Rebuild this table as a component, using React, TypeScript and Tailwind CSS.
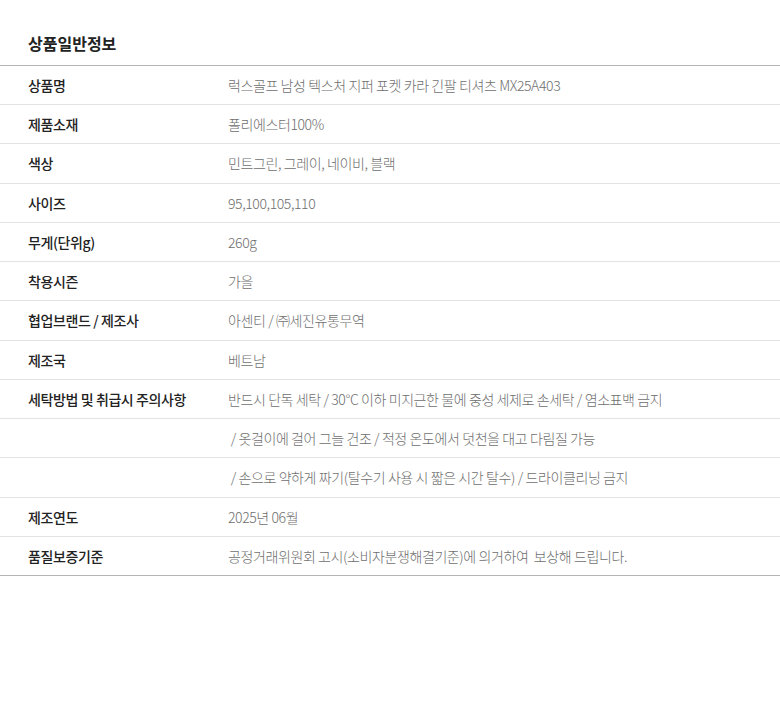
const rows: [string, string][] = [
  ["상품명", "럭스골프 남성 텍스처 지퍼 포켓 카라 긴팔 티셔츠 MX25A403"],
  ["제품소재", "폴리에스터100%"],
  ["색상", "민트그린, 그레이, 네이비, 블랙"],
  ["사이즈", "95,100,105,110"],
  ["무게(단위g)", "260g"],
  ["착용시즌", "가을"],
  ["협업브랜드 / 제조사", "아센티 / ㈜세진유통무역"],
  ["제조국", "베트남"],
  ["세탁방법 및 취급시 주의사항", "반드시 단독 세탁 / 30°C 이하 미지근한 물에 중성 세제로 손세탁 / 염소표백 금지"],
  ["", " / 옷걸이에 걸어 그늘 건조 / 적정 온도에서 덧천을 대고 다림질 가능"],
  ["", " / 손으로 약하게 짜기(탈수기 사용 시 짧은 시간 탈수) / 드라이클리닝 금지"],
  ["제조연도", "2025년 06월"],
  ["품질보증기준", "공정거래위원회 고시(소비자분쟁해결기준)에 의거하여  보상해 드립니다."],
];

const App = () => {
  return (
    <div
      className="w-[780px] min-h-[712px] bg-white"
      style={{ fontFamily: '"Noto Sans CJK KR", "Noto Sans", sans-serif' }}
    >
      <h2 className="px-[28px] pt-[30px] pb-[9px] text-[16px] leading-[26px] font-bold text-[#222]">
        상품일반정보
      </h2>
      <div className="border-t border-b border-[#b5b5b5]">
        {rows.map(([label, value], i) => (
          <div
            key={i}
            className={`flex text-[14px] tracking-[-0.4px] leading-[20.23px] py-[9px] ${i < rows.length - 1 ? "border-b border-[#e3e3e3]" : ""}`}
          >
            <div className="w-[228px] pl-[28px] shrink-0 font-medium text-[#222]">{label}</div>
            <div className="whitespace-pre text-[#6e6e6e] font-light">{value}</div>
          </div>
        ))}
      </div>
    </div>
  );
};

export default App;
